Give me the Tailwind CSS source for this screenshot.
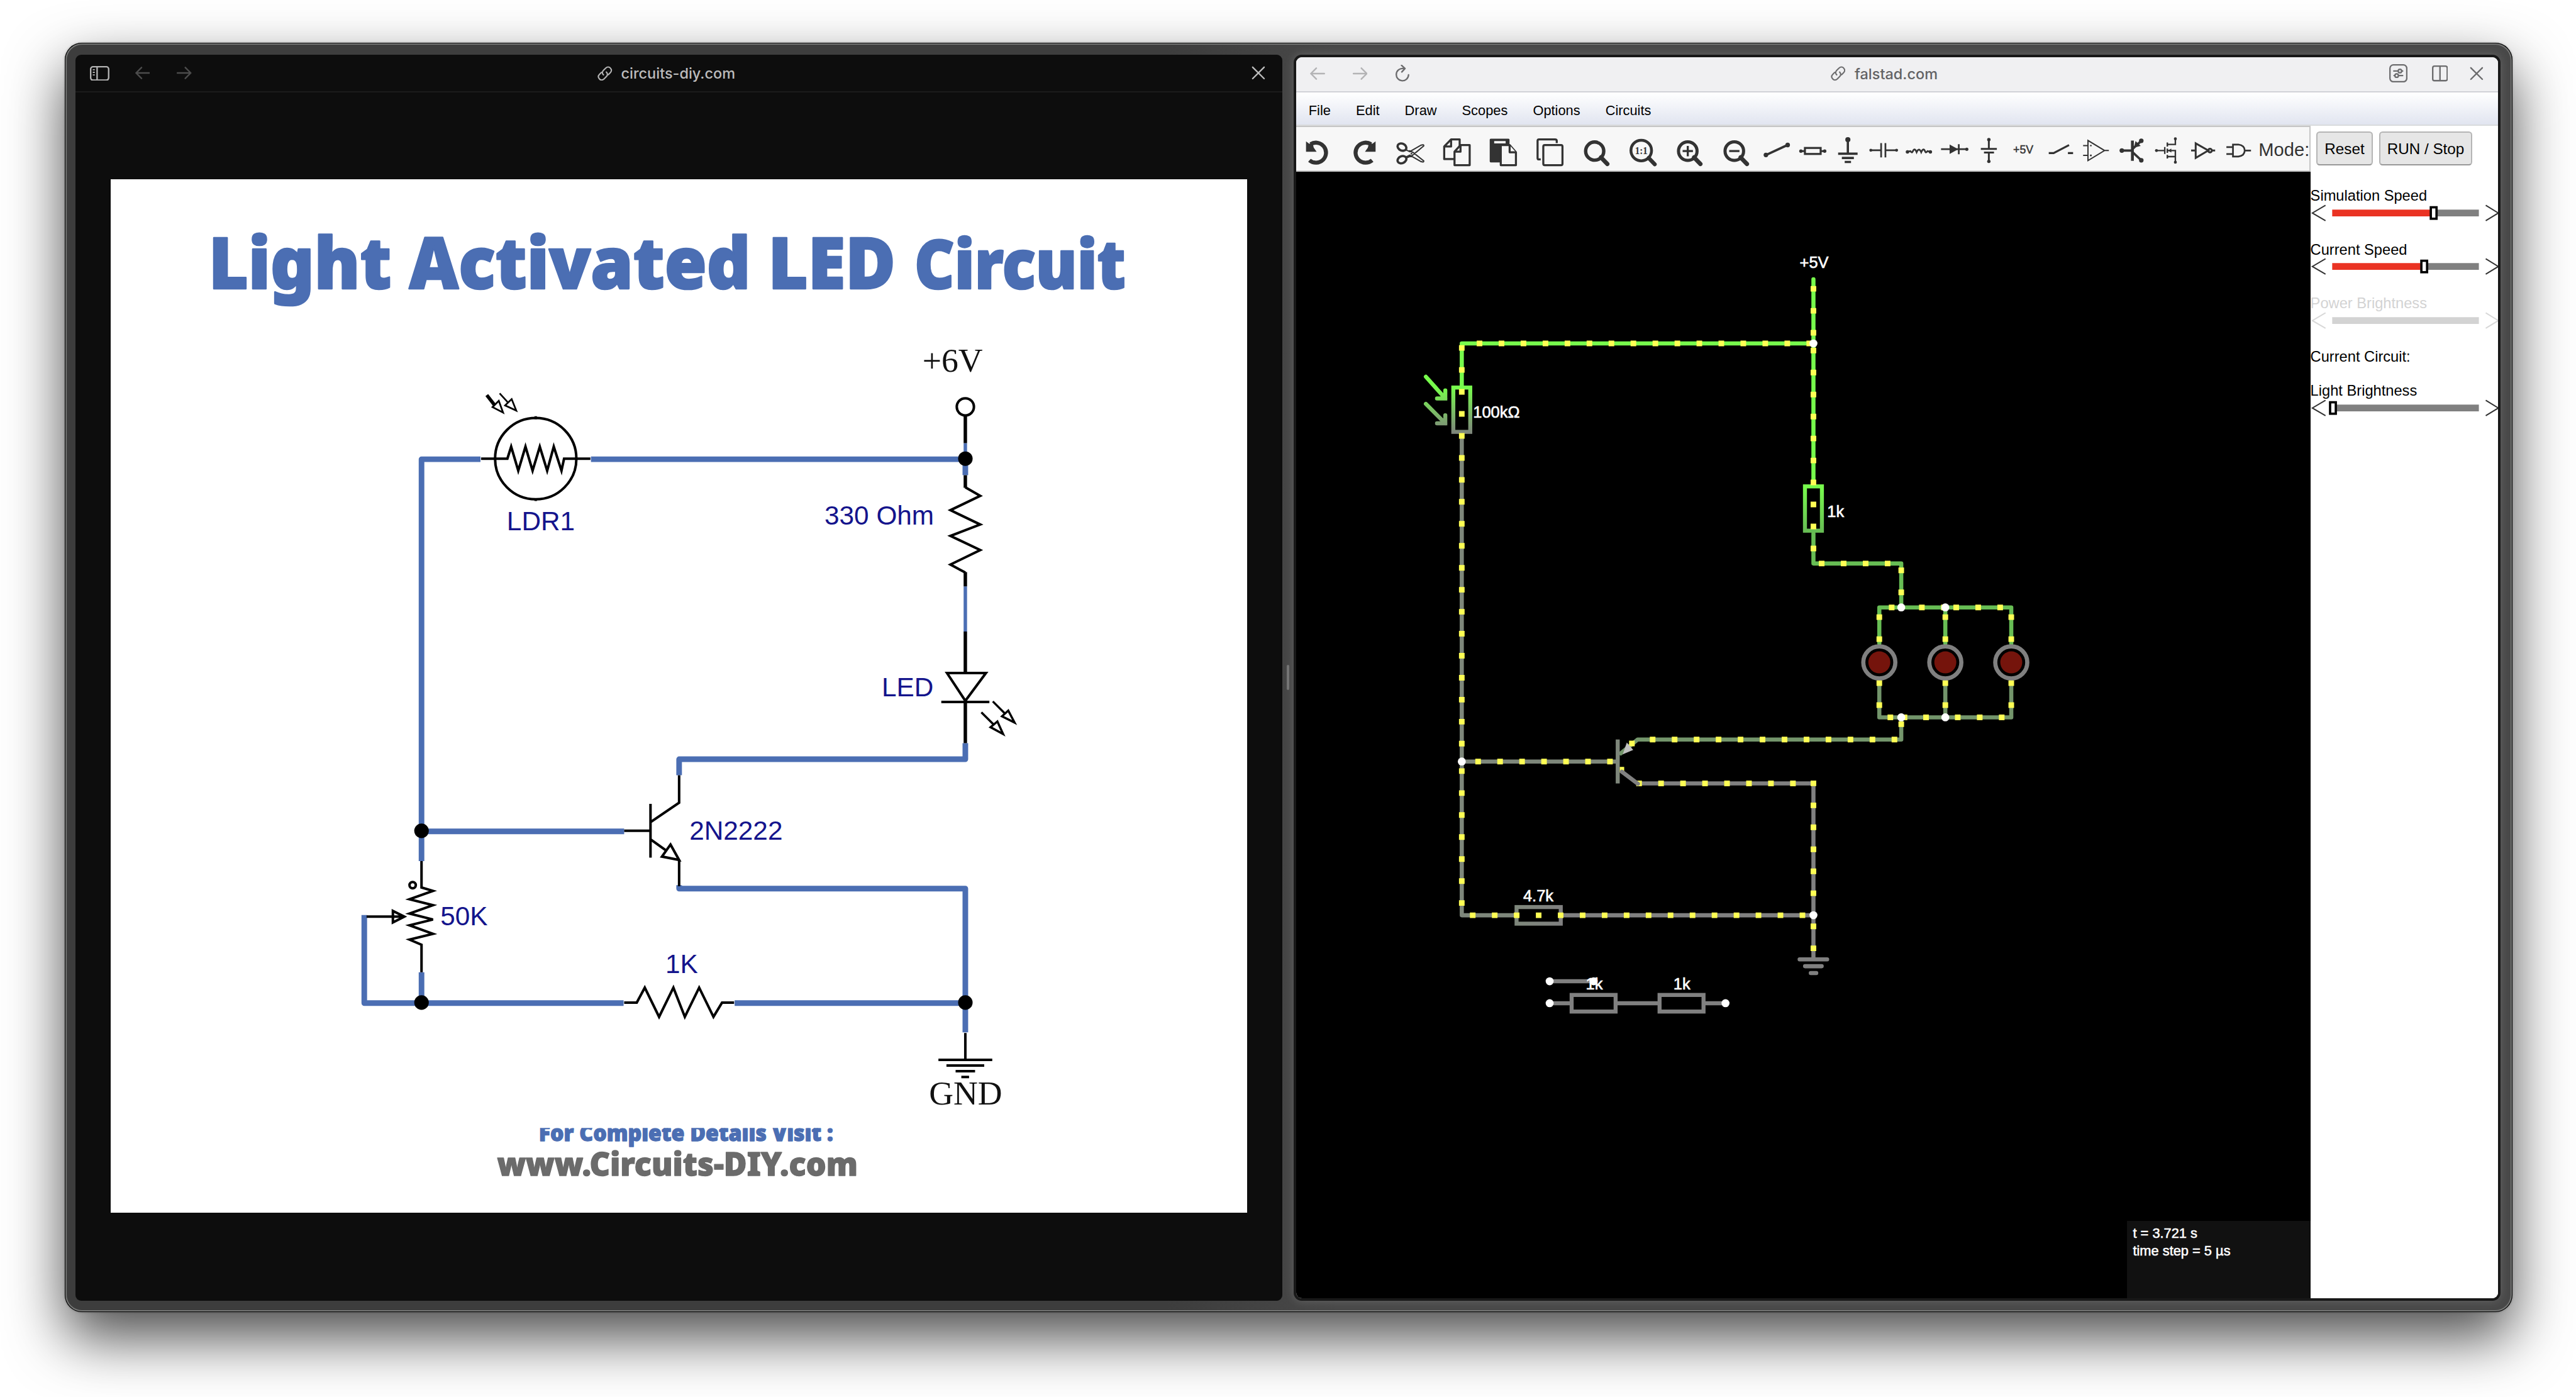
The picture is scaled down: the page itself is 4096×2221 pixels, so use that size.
<!DOCTYPE html>
<html lang="en">
<head>
<meta charset="utf-8">
<title>circuits-diy.com | falstad.com</title>
<script src="https://cdn.jsdelivr.net/npm/@tailwindcss/browser@4"></script>
</head>
<body class="bg-white overflow-hidden">
<div class="[zoom:1.82044] w-[2250px] h-[1220px] overflow-hidden bg-white pl-[56.5px] pt-[37.5px] font-['Liberation_Sans',Arial,sans-serif]">
  <!-- window frame -->
  <div class="relative flex w-[2138px] h-[1108.5px] rounded-[15px] pl-[9.5px] pr-[10px] pt-[10.5px] pb-[10px] gap-[10px] bg-linear-to-r from-[#3d3d3d] from-45% to-[#484848] to-52% shadow-[inset_0_0_0_0.6px_#000,inset_0_0_0_1.7px_#767776,0_22px_50px_rgba(0,0,0,0.7),0_0_2px_rgba(0,0,0,0.3)]">

    <!-- left pane -->
    <section class="flex flex-col w-[1054px] h-[1088px] rounded-[5px] bg-[#0d0d0d] overflow-hidden">
      <header class="flex items-center h-[33px] shrink-0 border-b-[1.1px] border-[#1b1b1b] pl-[12.5px] pr-[15px] text-[#bcbcbc]">
        <svg class="w-[17px] h-[13px]" viewBox="0 0 34 26" fill="none" stroke="#b4b4b4" stroke-width="2.6"><rect x="1.3" y="1.3" width="31.4" height="23.4" rx="4"/><path d="M12.5 1V25"/><path d="M5 6.5H8.5M5 11H8.5M5 15.500H8.500" stroke-width="2"/></svg>
        <svg class="w-[13px] h-[11px] ml-[22.500px]" viewBox="0 0 26 22" fill="none" stroke="#4c4c4c" stroke-width="2.600" stroke-linecap="round" stroke-linejoin="round"><path d="M25 11H1.500M11 1.500L1.500 11L11 20.500"/></svg>
        <svg class="w-[13px] h-[11px] ml-[23.500px]" viewBox="0 0 26 22" fill="none" stroke="#4c4c4c" stroke-width="2.600" stroke-linecap="round" stroke-linejoin="round"><path d="M1 11H24.500M15 1.500L24.500 11L15 20.500"/></svg>
        <svg class="w-[13px] h-[13px] ml-[354.500px]" viewBox="0 0 26 26" fill="none" stroke="#b4b4b4" stroke-width="2.300" stroke-linecap="round"><path d="M10.500 15.500C8 13 8 10 10.500 7.500L14.500 3.500C17 1 20.500 1 22.500 3.500C25 6 25 9 22.500 11.500L19 15M15.500 10.500C18 13 18 16 15.500 18.500L11.500 22.500C9 25 5.500 25 3.500 22.500C1 20 1 17 3.500 14.500L7 11"/></svg>
        <span class="ml-[7.500px] pt-[0.500px] text-[12.900px] leading-[15px] font-medium font-[Inter,sans-serif]">circuits-diy.com</span>
        <svg class="w-[12px] h-[12px] ml-auto" viewBox="0 0 24 24" fill="none" stroke="#bcbcbc" stroke-width="2.600" stroke-linecap="round"><path d="M2 2L22 22M22 2L2 22"/></svg>
      </header>
      <div class="pl-[30.500px] pt-[75.500px]">
        <svg class="block w-[993px] h-[902.500px] bg-white" viewBox="193 313 1986 1805" fill="none">
          <defs><clipPath id="crop"><rect x="900" y="1970" width="620" height="60"/></clipPath></defs>
          <g font-family="'Noto Sans','Open Sans',sans-serif" font-weight="900" fill="#4b6eb3" stroke="#4b6eb3" stroke-linejoin="round">
            <text x="364" y="504" font-size="125" stroke-width="3" textLength="1200" lengthAdjust="spacingAndGlyphs">Light Activated LED</text>
            <text x="1597" y="504" font-size="118" stroke-width="3" textLength="369" lengthAdjust="spacingAndGlyphs">Circuit</text>
            <text x="941" y="1993" font-size="39" stroke-width="1.500" textLength="514" lengthAdjust="spacingAndGlyphs" clip-path="url(#crop)">For Complete Details Visit :</text>
            <text x="868" y="2053" font-size="56" stroke-width="1.500" fill="#6b6b6b" stroke="#6b6b6b" textLength="630" lengthAdjust="spacingAndGlyphs">www.Circuits-DIY.com</text>
          </g>
          <!-- wires -->
          <g stroke="#4b6eb3" stroke-width="9.800" stroke-linejoin="round">
            <path d="M839 802H736V1504M1032 802H1686V830M1686 1298V1326H1186V1354M736 1452H1090M1186 1546V1552H1686V1803M736 1698V1752M636 1598V1752H1089M1283 1752H1686"/>
            <path d="M1686 774V790M1686 1024V1103" stroke-width="6"/>
          </g>
          <g stroke="#000" stroke-width="4.400">
            <circle cx="935.500" cy="801" r="71"/>
            <path d="M935.500 727V732M935.500 870V875"/>
            <path d="M840 801H886L892.600 780L905 822L917.600 780L930 822L942.600 780L955.500 822L967 780L980.500 822L985 801H1031"/>
            <path d="M850 690L864 708" stroke-width="6"/>
            <path d="M871 700L860 711L878.500 720.500ZM872.500 687L888 704M893.500 697L882 708L901.500 717Z" stroke-width="3"/>
            <circle cx="1686" cy="710.500" r="15"/>
            <path d="M1686 727V774M1686 830V852M1686 999V1024M1686 1103V1175M1686 1224V1298" stroke-width="6"/>
            <path d="M1686 851L1712 866L1660 891L1712 916L1660 936L1712 960.600L1660 986L1686 1000"/>
            <path d="M1654 1175.500H1722L1686 1224ZM1644 1226H1728"/>
            <path d="M1734 1225L1755 1246M1761 1241L1750 1251L1772 1262ZM1714 1244L1735 1265M1742 1260L1730 1270L1752 1282Z" stroke-width="3.800"/>
            <path d="M736 1504V1550L756 1556L715 1570.500L756 1581L715 1595.500L756 1606L715 1616L756 1631L715 1641L736 1650V1698"/>
            <circle cx="720.500" cy="1546" r="5.500"/>
            <path d="M640 1601H705M686 1591V1611L706 1601Z"/>
            <path d="M1090 1751H1112L1126 1725L1151 1776L1176 1725L1196 1776L1221 1725L1246 1776L1261 1751H1282"/>
            <path d="M1090 1451H1136M1136 1404V1498M1136 1436L1186 1402V1354M1136 1466L1164 1486M1171 1475L1156 1496L1186 1502ZM1186 1502V1548"/>
            <path d="M1686 1804V1851M1639 1851H1733M1653 1861H1719M1669 1871H1703M1679 1881H1692.500"/>
          </g>
          <g fill="#000"><circle cx="1686" cy="801" r="12.700"/><circle cx="736" cy="1451" r="12.700"/><circle cx="736" cy="1751" r="12.700"/><circle cx="1686" cy="1751" r="12.700"/></g>
          <g font-family="'Liberation Sans',Arial,sans-serif" font-size="46.500" fill="#14148c">
            <text x="885" y="926.500">LDR1</text>
            <text x="1440" y="916">330 Ohm</text>
            <text x="1540" y="1216">LED</text>
            <text x="1204" y="1466.500">2N2222</text>
            <text x="769" y="1616">50K</text>
            <text x="1162" y="1700">1K</text>
          </g>
          <g font-family="'Liberation Serif','Times New Roman',serif" font-size="59" fill="#111">
            <text x="1611" y="649">+6V</text>
            <text x="1622.500" y="1929.500">GND</text>
          </g>
        </svg>
      </div>
    </section>

    <!-- pane resize grip -->
    <div class="absolute left-[1067.200px] top-[543px] w-[2.500px] h-[22px] rounded-full bg-[#747474]"></div>

    <!-- right pane -->
    <section class="w-[1054px] h-[1088px] rounded-[7px] bg-[#181818] p-[2px] shadow-[0_0_9px_rgba(255,255,255,0.16)]">
      <div class="flex flex-col w-full h-full rounded-[5px] overflow-hidden bg-white">
        <header class="flex items-center h-[31px] shrink-0 border-b-[1.100px] border-[#d1d2d7] bg-[#f0f0f2] pl-[12.500px] pr-[13px] pb-[1.500px] text-[#636365]">
          <svg class="w-[13px] h-[11px]" viewBox="0 0 26 22" fill="none" stroke="#b3b3b5" stroke-width="2.600" stroke-linecap="round" stroke-linejoin="round"><path d="M25 11H1.500M11 1.500L1.500 11L11 20.500"/></svg>
          <svg class="w-[13px] h-[11px] ml-[24px]" viewBox="0 0 26 22" fill="none" stroke="#b3b3b5" stroke-width="2.600" stroke-linecap="round" stroke-linejoin="round"><path d="M1 11H24.500M15 1.500L24.500 11L15 20.500"/></svg>
          <svg class="w-[12px] h-[15px] ml-[24.500px]" viewBox="0 0 24 30" fill="none" stroke="#6c6c6e" stroke-width="2.600" stroke-linecap="round" stroke-linejoin="round"><path d="M13 6.500A10.700 10.700 0 1 0 22.700 17.500M10.500 1L16.500 6.500L11 12.500"/></svg>
          <svg class="w-[13px] h-[13px] ml-[368px]" viewBox="0 0 26 26" fill="none" stroke="#6c6c6e" stroke-width="2.300" stroke-linecap="round"><path d="M10.500 15.500C8 13 8 10 10.500 7.500L14.500 3.500C17 1 20.500 1 22.500 3.500C25 6 25 9 22.500 11.500L19 15M15.500 10.500C18 13 18 16 15.500 18.500L11.500 22.500C9 25 5.500 25 3.500 22.500C1 20 1 17 3.500 14.500L7 11"/></svg>
          <span class="ml-[8px] pt-[0.500px] text-[12.900px] leading-[15px] font-medium font-[Inter,sans-serif]">falstad.com</span>
          <div class="flex items-center ml-auto">
            <svg class="w-[16px] h-[16px]" viewBox="0 0 32 32" fill="none" stroke="#6c6c6e" stroke-width="2.500" stroke-linecap="round"><rect x="1.300" y="1.300" width="29.400" height="29.400" rx="6"/><path d="M8 12H15M22.500 12H23.500M8.500 20H9.500M17 20H23.500"/><circle cx="18.700" cy="12" r="3"/><circle cx="13" cy="20" r="3"/></svg>
            <svg class="w-[14px] h-[14px] ml-[21px]" viewBox="0 0 28 28" fill="none" stroke="#6c6c6e" stroke-width="2.600"><rect x="1.300" y="1.300" width="25.400" height="25.400" rx="3"/><path d="M14 1V27"/></svg>
            <svg class="w-[12px] h-[12px] ml-[19px]" viewBox="0 0 24 24" fill="none" stroke="#6c6c6e" stroke-width="2.600" stroke-linecap="round"><path d="M2 2L22 22M22 2L2 22"/></svg>
          </div>
        </header>
        <nav class="flex items-center h-[29px] shrink-0 border-b-[1.100px] border-[#d9dbdd] bg-linear-to-b from-white to-[#e1e5f0] text-[12px] leading-[14px] text-black pt-[3px]">
          <span class="px-[11px]">File</span><span class="px-[11px]">Edit</span><span class="px-[11px]">Draw</span><span class="px-[11px]">Scopes</span><span class="px-[11px]">Options</span><span class="px-[11px]">Circuits</span>
        </nav>
        <div class="flex grow min-h-0">
          <main class="flex flex-col w-[886px]">
            <div class="flex h-[40px] shrink-0 border-y-[1.100px] border-r-[1.100px] border-[#c6c6c6] bg-[#f7f7f7] overflow-hidden text-[#333]">
              <div class="flex -ml-[1.300px] shrink-0 h-[38px]">
                <svg class="w-[40.600px] h-[38px]" viewBox="0 0 81.200 76" fill="none" stroke="#333" stroke-width="7"><path d="M26.500 58A17.500 17.500 0 1 0 28.500 30"/><path d="M20.500 25L26 29L32 28L34 36L39 43H20.500Z" fill="#333" stroke="none"/></svg>
                <svg class="w-[40.600px] h-[38px]" viewBox="0 0 81.200 76" fill="none" stroke="#333" stroke-width="7"><path d="M54.700 58A17.500 17.500 0 1 1 52.700 30"/><path d="M60.700 25L55.200 29L49.200 28L47.200 36L42.200 43H60.700Z" fill="#333" stroke="none"/></svg>
                <svg class="w-[40.600px] h-[38px]" viewBox="0 0 81.200 76" fill="none" stroke="#333" stroke-width="4"><ellipse cx="25.500" cy="35" rx="8" ry="6" transform="rotate(25 25.500 35)"/><ellipse cx="25.500" cy="57" rx="8" ry="6" transform="rotate(-25 25.500 57)"/><path d="M33 40L39 43L59 31.500Q64 30 63.500 33L43 50L33 54M33 52L39 49L59 60.500Q64 62 63.500 59L45 44.500L38 41" stroke-width="2.300"/><circle cx="42" cy="46.500" r="1.500" fill="#333" stroke="none"/></svg>
                <svg class="w-[40.600px] h-[38px]" viewBox="0 0 81.200 76" fill="none" stroke="#333" stroke-width="3.600" stroke-linejoin="round"><path d="M35 56H18V34L30 21.500H45V33M30 21.500V34H18"/><path d="M46.500 31.500H62.500V66.500H36V43ZM46.500 31.500V43H36" fill="#f7f7f7"/></svg>
                <svg class="w-[40.600px] h-[38px]" viewBox="0 0 81.200 76" fill="none" stroke="#333" stroke-width="3.600" stroke-linejoin="round"><path d="M18 22H49V60H18Z" fill="#333"/><path d="M24 26.500H44" stroke="#f7f7f7" stroke-width="4"/><path d="M35.500 31.500H51L62 44V66.500H35.500Z" fill="#f7f7f7"/><path d="M51 31.500V44H62" fill="#f7f7f7"/></svg>
                <svg class="w-[40.600px] h-[38px]" viewBox="0 0 81.200 76" fill="none" stroke="#333" stroke-width="3.600" stroke-linejoin="round"><path d="M24 56.500H21Q18.500 56.500 18.500 54V24Q18.500 21.500 21 21.500H49Q52 21.500 52 24V28"/><rect x="28.500" y="31.500" width="33.500" height="35" rx="2.500"/></svg>
                <svg class="w-[40.600px] h-[38px]" viewBox="0 0 81.200 76" fill="none" stroke="#333" stroke-width="6"><circle cx="37" cy="42" r="15.800"/><path d="M48 53L59 64.500" stroke-width="7.500" stroke-linecap="round"/></svg>
                <svg class="w-[40.600px] h-[38px]" viewBox="0 0 81.200 76" fill="none" stroke="#333" stroke-width="5"><circle cx="37" cy="41" r="18"/><path d="M50 54L60.500 65" stroke-width="7" stroke-linecap="round"/><text x="37" y="47.500" font-size="19" font-weight="bold" text-anchor="middle" textLength="22" lengthAdjust="spacingAndGlyphs" stroke="none" fill="#333" font-family="Liberation Serif, serif">1:1</text></svg>
                <svg class="w-[40.600px] h-[38px]" viewBox="0 0 81.200 76" fill="none" stroke="#333" stroke-width="5.500"><circle cx="37" cy="42" r="16.200"/><path d="M48 53L59 64.500" stroke-width="7.500" stroke-linecap="round"/><path d="M28 42H46M37 33V51" stroke-width="3.600"/></svg>
                <svg class="w-[40.600px] h-[38px]" viewBox="0 0 81.200 76" fill="none" stroke="#333" stroke-width="5.500"><circle cx="37" cy="42" r="16.200"/><path d="M48 53L59 64.500" stroke-width="7.500" stroke-linecap="round"/><path d="M28 42H46" stroke-width="3.600"/></svg>
              </div>
              <div class="flex shrink-0 h-[38px]">
                <svg class="w-[31px] h-[38px]" viewBox="0 0 62 76" fill="#333" stroke="#333" stroke-width="4"><path d="M12.300 48.700L49.800 31.300"/><g stroke="none"><circle cx="12" cy="48.700" r="4"/><circle cx="50" cy="31.300" r="4"/></g></svg>
                <svg class="w-[31px] h-[38px]" viewBox="0 0 62 76" fill="none" stroke="#333" stroke-width="3.500"><rect x="17.500" y="36.500" width="27.500" height="10.500"/><path d="M9 42H17M45 42H53"/><g fill="#333" stroke="none"><circle cx="10.500" cy="42" r="3"/><circle cx="52" cy="42" r="3"/></g></svg>
                <svg class="w-[31px] h-[38px]" viewBox="0 0 62 76" fill="none" stroke="#333" stroke-width="4"><path d="M31 22V46M14 46.500H48M20.500 54H41.500M25.500 61H36.500"/><circle cx="31" cy="22" r="4.500" fill="#333" stroke="none"/></svg>
                <svg class="w-[31px] h-[38px]" viewBox="0 0 62 76" fill="none" stroke="#333" stroke-width="3"><path d="M7 40.500H26.500M34 40.500H55M26.500 28V53M34 28V53"/><circle cx="8.500" cy="40.500" r="2.600" fill="#333" stroke="none"/><circle cx="53.500" cy="40.500" r="2.600" fill="#333" stroke="none"/></svg>
                <svg class="w-[31px] h-[38px]" viewBox="0 0 62 76" fill="none" stroke="#333" stroke-width="3"><path d="M10 43.500L16 42Q19 46 20 43Q23.500 35 27 44Q31 35 35 44Q39 35 42 43Q43 46 46 42L52 43.500"/><circle cx="11" cy="43.500" r="3" fill="#333" stroke="none"/><circle cx="51" cy="43.500" r="3" fill="#333" stroke="none"/></svg>
                <svg class="w-[31px] h-[38px]" viewBox="0 0 62 76" fill="#333" stroke="#333" stroke-width="3"><path d="M7 38.700H54M38 30V47.500"/><path d="M22 30.500V47L37 38.700Z" stroke="none"/><circle cx="52" cy="38.700" r="2.800" stroke="none"/></svg>
                <svg class="w-[31px] h-[38px]" viewBox="0 0 62 76" fill="#333" stroke="#333" stroke-width="3.300"><path d="M29 22V38M29 44.500V60M15 38.200H43M20.500 44.500H38"/><circle cx="29" cy="22" r="3" stroke="none"/><circle cx="29" cy="60" r="3" stroke="none"/></svg>
                <svg class="w-[31px] h-[38px]" viewBox="0 0 62 76"><text x="10" y="46" font-size="19.500" fill="#333" stroke="#333" stroke-width="0.500">+5V</text></svg>
                <svg class="w-[31px] h-[38px]" viewBox="0 0 62 76" fill="none" stroke="#333" stroke-width="3.400"><path d="M9.500 45.500H18L45 31.500M43 45.500H52"/></svg>
                <svg class="w-[31px] h-[38px]" viewBox="0 0 62 76" fill="none" stroke="#333" stroke-width="2.200"><path d="M16.500 23.500V58.500L45.500 41ZM8 32.500H16.500M8 49.500H16.500M45 41H53M20 32.500H23M20 49.500H23M21.500 48V51"/></svg>
                <svg class="w-[31px] h-[38px]" viewBox="0 0 62 76" fill="#333" stroke="#333" stroke-width="4"><path d="M12 41H32"/><path d="M31.500 23.500V59" stroke-width="5"/><path d="M32 38L47 24M32 44L47 58"/><path d="M34 36L37 24.500L46 33Z" stroke="none"/><circle cx="13" cy="41" r="4" stroke="none"/><circle cx="47" cy="24" r="4" stroke="none"/><circle cx="47" cy="58" r="4" stroke="none"/></svg>
                <svg class="w-[31px] h-[38px]" viewBox="0 0 62 76" fill="none" stroke="#333" stroke-width="2.600"><path d="M12 41H26.500M26.500 35V47M31 27V34M31 37.500V45M31 48.500V55M31 30.300H45V20M31 51.700H45V62M31 41H45V51.700"/><path d="M32 41L38 37.500V44.500Z" fill="#333" stroke="none"/><g fill="#333" stroke="none"><circle cx="12" cy="41" r="2.600"/><circle cx="45" cy="20.500" r="2.600"/><circle cx="45" cy="61.500" r="2.600"/></g></svg>
                <svg class="w-[31px] h-[38px]" viewBox="0 0 62 76" fill="none" stroke="#333" stroke-width="3.300"><path d="M19 28.500V54L41 41ZM11 41H19M47.500 41H53"/><circle cx="44" cy="41" r="3.200"/></svg>
                <svg class="w-[31px] h-[38px]" viewBox="0 0 62 76" fill="none" stroke="#333" stroke-width="3"><path d="M21.500 30.500H31Q42 32 42 41Q42 50 31 51.500H21.500ZM10 35H21.500M10 47H21.500M42 41H53"/></svg>
              </div>
              <span class="ml-[2.200px] mt-[11px] text-[16px] leading-[18px] whitespace-nowrap">Mode:</span>
            </div>
            <div class="relative grow bg-black">
              <svg class="block w-[886px] h-[984px]" viewBox="2264 300 1772 1968" fill="none">
                <defs>
                  <linearGradient id="ldr" gradientUnits="userSpaceOnUse" x1="0" y1="677" x2="0" y2="755"><stop offset="0" stop-color="#77fb4c"/><stop offset="1" stop-color="#7e877b"/></linearGradient>
                  <linearGradient id="r1" gradientUnits="userSpaceOnUse" x1="0" y1="850" x2="0" y2="927"><stop offset="0" stop-color="#77fb4c"/><stop offset="1" stop-color="#67bd54"/></linearGradient>
                  <linearGradient id="r47" gradientUnits="userSpaceOnUse" x1="2649" y1="0" x2="2726" y2="0"><stop offset="0" stop-color="#7e877b"/><stop offset="1" stop-color="#808080"/></linearGradient>
                </defs>
                <g stroke-width="7.200" stroke-linecap="round" stroke-linejoin="round">
                  <path stroke="#77fb4c" d="M3167.600 488V846M3167.600 600H2553.300V675"/>
                  <path stroke="#67bd54" d="M3167.600 932V984.300H3321V1061M3282.700 1124V1061H3513.200V1124M3398 1061V1124"/>
                  <path stroke="#73956b" d="M3282.700 1190V1253H3513.200V1190M3398 1190V1253M3321 1253V1291.700H2860.500L2831 1316"/>
                  <path stroke="#7e877b" d="M2553.300 759V1598.700H2645M2553.300 1330.200H2822"/>
                  <path stroke="#808080" d="M2730 1598.700H3167.600M2863 1368.500H3167.600V1672M3143.500 1675.700H3191.500M3153 1687.700H3182M3163 1699.700H3172.500M2706.800 1714H2783.600M2706.800 1752.300H2741M2826 1752.300H2895M2980 1752.300H3014"/>
                </g>
                <g stroke-width="7">
                  <rect stroke="url(#ldr)" x="2538.500" y="677" width="29.600" height="77.400"/>
                  <rect stroke="url(#r1)" x="3152.800" y="849.600" width="29.600" height="77.400"/>
                  <rect stroke="url(#r47)" x="2649" y="1584.400" width="77.200" height="29"/>
                  <rect stroke="#808080" x="2745.200" y="1737.900" width="76.800" height="29"/>
                  <rect stroke="#808080" x="2898.800" y="1737.900" width="76.800" height="29"/>
                  <path stroke="url(#ldr)" stroke-linecap="round" d="M2490.500 658L2524.500 696M2524.500 682V696H2510M2490.500 705.500L2524.500 739.500M2524.500 725.500V739.500H2510"/>
                </g>
                <!-- current dots, one every 38.4 units -->
                <g stroke="#ffff54" stroke-width="9.800" stroke-dasharray="9.800 28.600">
                  <path d="M3167.600 499.600V588M2579.400 600H3167M2553.300 603V612.500M2553.300 641.300V1310M2553.300 1342V1585"/>
                  <path d="M3167.600 607.500V966M3177.100 984.300H3305M3321 991.400V1042M3299.400 1061H3312M3352.100 1061H3402M3412.100 1061H3505"/>
                  <path d="M3282.700 1073.100V1124M3398 1073.100V1124M3513.200 1073.100V1124M3282.700 1188.300V1240M3398 1188.300V1240M3513.200 1188.300V1240"/>
                  <path d="M3297.100 1253H3308M3321.800 1253H3333M3359.400 1253H3370M3414.800 1253H3505M3321 1260.100V1271M2881.800 1291.700H3316"/>
                  <path d="M2576.900 1330.200H2820M2858.100 1368.500H3140M3167.600 1363.400V1570M2567.500 1598.700H3156M3167.600 1613.100V1664M2845.600 1298.700H2856M2829 1344.500H2837"/>
                </g>
                <path stroke="#808080" stroke-width="7.200" stroke-linecap="round" d="M2833 1348L2861 1369"/>
                <path fill="#c0c0c0" d="M2841.600 1297L2852.800 1310L2834.500 1317.700Z"/>
                <path stroke="#7e877b" stroke-width="7" d="M2825.700 1291.700V1368.500"/>
                <g stroke="#808080" stroke-width="7.300"><circle cx="3282.700" cy="1157" r="28"/><circle cx="3398" cy="1157" r="28"/><circle cx="3513.200" cy="1157" r="28"/></g>
                <g fill="#75140c"><circle cx="3282.700" cy="1157" r="19.200"/><circle cx="3398" cy="1157" r="19.200"/><circle cx="3513.200" cy="1157" r="19.200"/></g>
                <g fill="#fff"><circle cx="3167.600" cy="600" r="7"/><circle cx="3321" cy="1061" r="7"/><circle cx="3398" cy="1061" r="7"/><circle cx="3321" cy="1253" r="7"/><circle cx="3398" cy="1253" r="7"/><circle cx="2553.300" cy="1330.200" r="7"/><circle cx="3167.600" cy="1598.700" r="7"/><circle cx="2706.800" cy="1714" r="7"/><circle cx="2783.600" cy="1714" r="7"/><circle cx="2706.800" cy="1752.300" r="7"/><circle cx="3014" cy="1752.300" r="7"/></g>
                <g fill="#fff" stroke="#fff" stroke-width="0.700" font-family="'Liberation Sans',Arial,sans-serif" font-size="28">
                  <text x="3143.500" y="468">+5V</text>
                  <text x="2573" y="729.500">100kΩ</text>
                  <text x="3191.500" y="903">1k</text>
                  <text x="2660.500" y="1574.700">4.7k</text>
                  <text x="2770" y="1728">1k</text>
                  <text x="2923" y="1728">1k</text>
                </g>
              </svg>
              <div class="absolute right-0 bottom-0 w-[160px] h-[68px] bg-[#111] pl-[5px] pt-[3.700px] text-white text-[12px] leading-[15px] [-webkit-text-stroke:0.300px_#fff]">
                <p>t = 3.721 s</p>
                <p>time step = 5 µs</p>
              </div>
            </div>
          </main>
          <aside class="flex flex-col w-[164px] bg-white text-black text-[13px] leading-[15px]">
            <div class="flex gap-[5.400px] pl-[5px] pt-[5px]">
              <button class="h-[29.500px] w-[49.800px] rounded-[3px] border-[1.100px] border-[#b5b5b5] border-b-[#989898] bg-[#e6e6e6] pt-[0.500px] text-[13.333px] leading-[15px]">Reset</button>
              <button class="h-[29.500px] w-[81.100px] rounded-[3px] border-[1.100px] border-[#b5b5b5] border-b-[#989898] bg-[#e6e6e6] pt-[0.500px] text-[13.333px] leading-[15px]">RUN / Stop</button>
            </div>
            <div class="mt-[18.800px]">
              <p class="relative top-[0.600px]">Simulation Speed</p>
              <svg class="block w-[164px] h-[15px]" viewBox="4036 357 328 30" fill="none"><path d="M4062 358.500L4039 372L4062 385.500M4342 358.500L4364 372L4342 385.500" stroke="#333" stroke-width="2.200"/><path d="M4073.700 372H4245" stroke="#ea3323" stroke-width="11.600"/><path d="M4257 372H4330" stroke="#808080" stroke-width="11.600"/><rect x="4246" y="362" width="10" height="20" stroke="#000" stroke-width="4" fill="#fff"/></svg>
            </div>
            <div class="mt-[17px]">
              <p class="relative top-[0.600px]">Current Speed</p>
              <svg class="block w-[164px] h-[15px]" viewBox="4036 357 328 30" fill="none"><path d="M4062 358.500L4039 372L4062 385.500M4342 358.500L4364 372L4342 385.500" stroke="#333" stroke-width="2.200"/><path d="M4073.700 372H4228" stroke="#ea3323" stroke-width="11.600"/><path d="M4241 372H4330" stroke="#808080" stroke-width="11.600"/><rect x="4229.500" y="362" width="10" height="20" stroke="#000" stroke-width="4" fill="#fff"/></svg>
            </div>
            <div class="mt-[17px] text-[#d3d3d3]">
              <p class="relative top-[0.600px]">Power Brightness</p>
              <svg class="block w-[164px] h-[15px]" viewBox="4036 357 328 30" fill="none"><path d="M4062 358.500L4039 372L4062 385.500M4342 358.500L4364 372L4342 385.500" stroke="#d8d8d8" stroke-width="2.200"/><path d="M4073.700 372H4330" stroke="#d3d3d3" stroke-width="11.600"/></svg>
            </div>
            <p class="mt-[17px]">Current Circuit:</p>
            <div class="mt-[14.500px]">
              <p>Light Brightness</p>
              <svg class="block w-[164px] h-[15px]" viewBox="4036 357 328 30" fill="none"><path d="M4062 358.500L4039 372L4062 385.500M4342 358.500L4364 372L4342 385.500" stroke="#333" stroke-width="2.200"/><path d="M4076 372H4330" stroke="#808080" stroke-width="11.600"/><rect x="4070" y="362" width="10" height="20" stroke="#000" stroke-width="4" fill="#fff"/></svg>
            </div>
          </aside>
        </div>
      </div>
    </section>
  </div>
</div>
</body>
</html>
